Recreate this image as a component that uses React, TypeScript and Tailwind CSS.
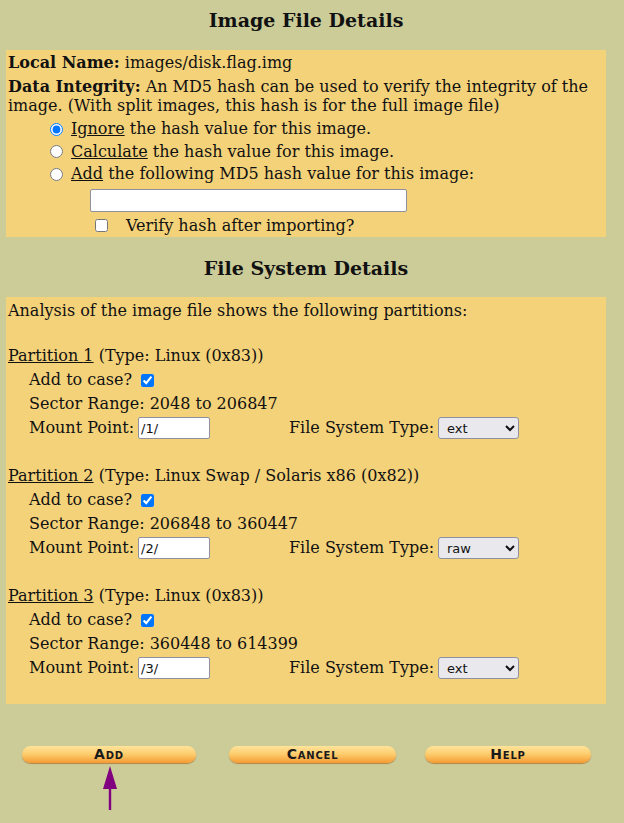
import React from 'react';

interface Partition {
  num: number;
  type: string;
  start: string;
  end: string;
  mount: string;
  fs: string;
}

const partitions: Partition[] = [
  { num: 1, type: 'Linux (0x83)', start: '2048', end: '206847', mount: '/1/', fs: 'ext' },
  { num: 2, type: 'Linux Swap / Solaris x86 (0x82)', start: '206848', end: '360447', mount: '/2/', fs: 'raw' },
  { num: 3, type: 'Linux (0x83)', start: '360448', end: '614399', mount: '/3/', fs: 'ext' },
];

const serif = { fontFamily: '"DejaVu Serif", serif' };

const PillButton: React.FC<{ label: string; width: string }> = ({ label, width }) => (
  <div
    className={`${width} h-[17px] rounded-full flex items-center justify-center bg-gradient-to-b from-[#ffe49a] via-[#fdcb6a] to-[#f39a32] shadow-[0_1px_1px_rgba(160,90,20,0.6)]`}
  >
    <span className="text-[14px] leading-none font-bold text-[#1a1a1a] tracking-[0.8px] [font-variant:small-caps] font-['DejaVu_Sans',sans-serif]">
      {label}
    </span>
  </div>
);

const App: React.FC = () => {
  return (
    <div className="min-h-[823px] w-[624px] bg-[#cccc99] text-[16px] text-[#111]" style={serif}>
      <div className="w-[600px] ml-[6px]">
        <h2 className="h-[50px] pt-[7px] text-center text-[19px] font-bold leading-[26px]">Image File Details</h2>

        <div className="bg-[#f4d27a] pt-[3px] pl-[2px] h-[187px]">
          <div className="h-[19px] leading-[19px]">
            <b>Local Name:</b> images/disk.flag.img
          </div>
          <p className="mt-[5px] leading-[19px]">
            <b>Data Integrity:</b> An MD5 hash can be used to verify the integrity of the image. (With split images, this hash is for the full image file)
          </p>
          <div className="mt-[3px] pl-[42px]">
            <label className="flex items-center h-[22px]">
              <input type="radio" name="hash" defaultChecked className="w-[13px] h-[13px] m-0 mr-[8px]" />
              <span><u>Ignore</u> the hash value for this image.</span>
            </label>
            <label className="flex items-center h-[23px]">
              <input type="radio" name="hash" className="w-[13px] h-[13px] m-0 mr-[8px]" />
              <span><u>Calculate</u> the hash value for this image.</span>
            </label>
            <label className="flex items-center h-[22px]">
              <input type="radio" name="hash" className="w-[13px] h-[13px] m-0 mr-[8px]" />
              <span>
                <u>Add</u> the following MD5 hash value for this image:
              </span>
            </label>
          </div>
          <div className="pl-[82px] mt-[3px]">
            <input type="text" className="w-[317px] h-[23px] bg-white border border-[#8f8f9d] rounded-[2px]" />
          </div>
          <label className="flex items-center h-[23px] pl-[87px] mt-[2px]">
            <input type="checkbox" className="w-[13px] h-[13px] m-0 mr-[18px]" />
            <span>Verify hash after importing?</span>
          </label>
        </div>

        <h2 className="h-[60px] pt-[18px] text-center text-[19px] font-bold leading-[26px]">File System Details</h2>

        <div className="bg-[#f4d27a] pl-[2px] pt-[2px] pb-[24px]">
          <div className="h-[24px] leading-[24px]">Analysis of the image file shows the following partitions:</div>
          {partitions.map((p, i) => (
            <div key={p.num} className={i === 0 ? 'mt-[21px]' : 'mt-[24px]'}>
              <div className="h-[24px] leading-[24px]">
                <u>Partition {p.num}</u> (Type: {p.type})
              </div>
              <div className="pl-[21px]">
                <div className="h-[24px] flex items-center">
                  <span>Add to case?</span>
                  <input type="checkbox" defaultChecked className="w-[13px] h-[13px] m-0 ml-[9px]" />
                </div>
                <div className="h-[24px] leading-[24px]">
                  Sector Range: {p.start} to {p.end}
                </div>
                <div className="h-[24px] flex items-center">
                  <span className="w-[109px]">Mount Point:</span>
                  <input
                    type="text"
                    defaultValue={p.mount}
                    className="w-[72px] h-[22px] bg-white border border-[#8f8f9d] rounded-[2px] px-[2px] text-[13px] font-['DejaVu_Sans',sans-serif]"
                  />
                  <span className="ml-[79px] w-[149px]">File System Type:</span>
                  <select
                    defaultValue={p.fs}
                    className="w-[81px] h-[22px] bg-[#e9e9ed] border border-[#8f8f9d] rounded-[3px] pl-[4px] text-[13px] font-['DejaVu_Sans',sans-serif]"
                  >
                    <option value="ext">ext</option>
                    <option value="raw">raw</option>
                    <option value="swap">swap</option>
                  </select>
                </div>
              </div>
            </div>
          ))}
        </div>

        <div className="flex items-center h-[20px] mt-[40px]">
          <div className="ml-[16px]">
            <PillButton label="Add" width="w-[174px]" />
          </div>
          <div className="ml-[33px]">
            <PillButton label="Cancel" width="w-[167px]" />
          </div>
          <div className="ml-[29px]">
            <PillButton label="Help" width="w-[166px]" />
          </div>
        </div>
        <div className="pl-[94px] mt-[1px]">
          <svg width="20" height="46" viewBox="0 0 20 46">
            <polygon points="10,1 3,24 17,24" fill="#800080" />
            <rect x="8.8" y="22" width="2.4" height="23" fill="#800080" />
          </svg>
        </div>
      </div>
    </div>
  );
};

export default App;
